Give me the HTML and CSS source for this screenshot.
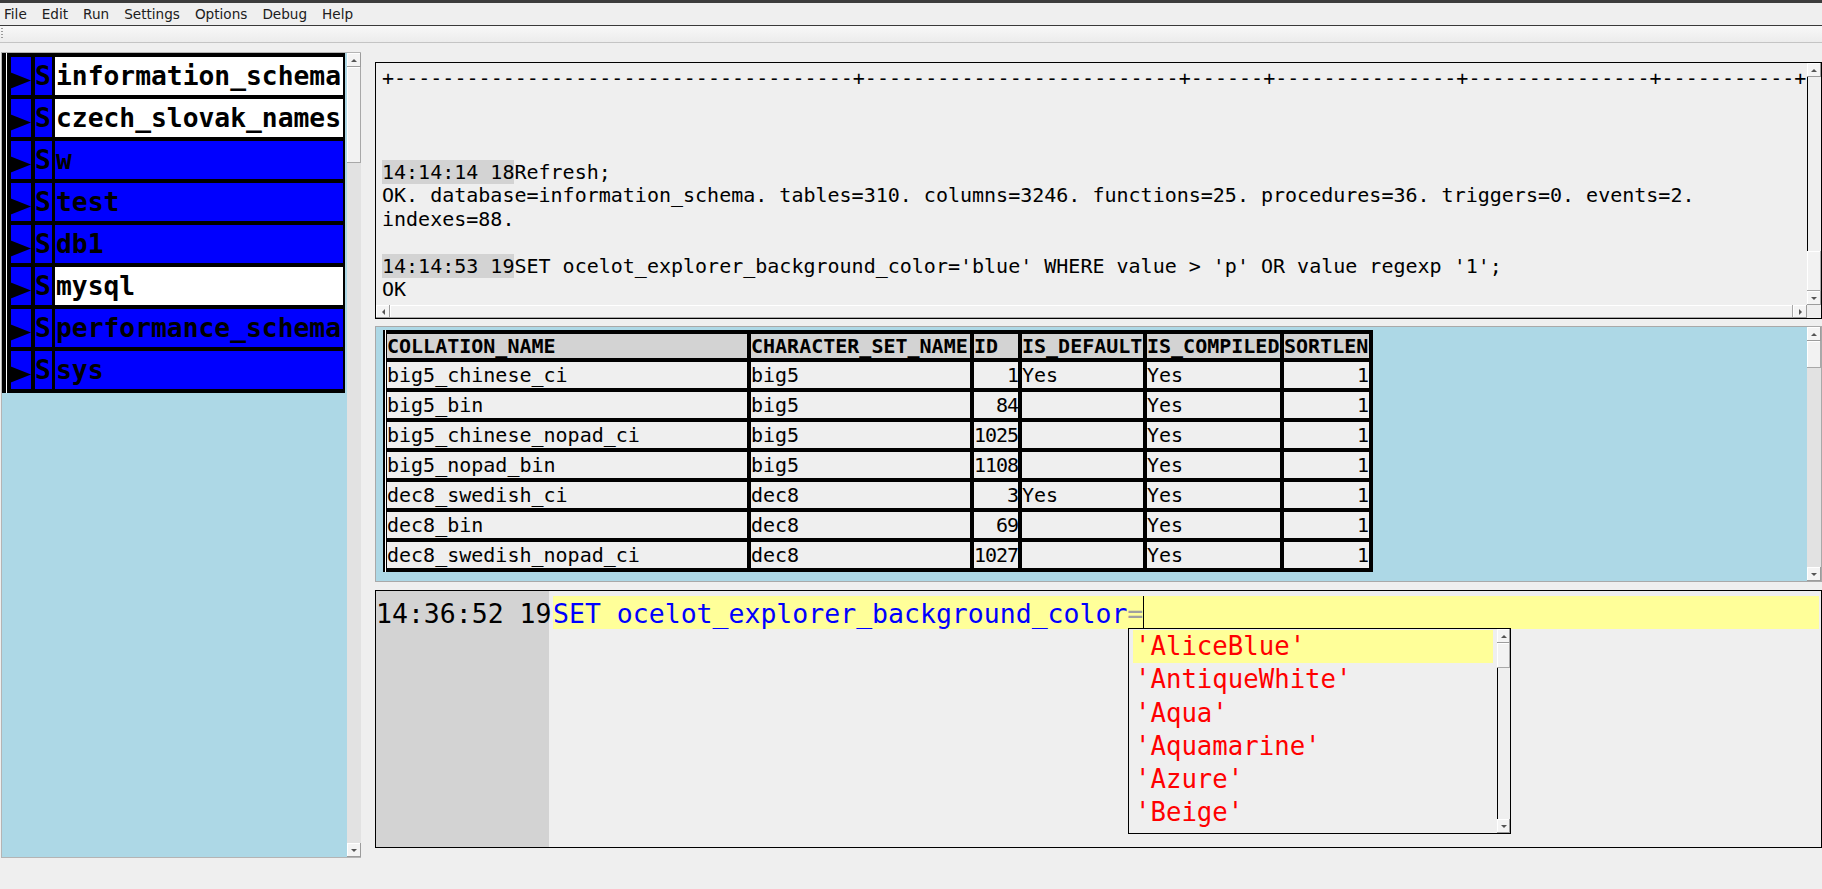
FILE: index.html
```html
<!DOCTYPE html>
<html>
<head>
<meta charset="utf-8">
<link rel="stylesheet" href="styles.css">
</head>
<body>
<div class="topstrip"></div>
<div class="menubar">
  <span>File</span><span>Edit</span><span>Run</span><span>Settings</span><span>Options</span><span>Debug</span><span>Help</span>
</div>
<div class="toolbar"><div class="grip"></div></div>
<div class="main">
  <div class="explorer">
    <div class="tree-area">
      <div class="tree">
        <div class="trow"><div class="tri"><svg class="tri-ico" width="24" height="38" viewBox="0 0 24 38"><polygon points="0,14 24,23.5 0,33"/></svg></div><div class="s">S</div><div class="name hi">information_schema</div></div>
        <div class="trow"><div class="tri"><svg class="tri-ico" width="24" height="38" viewBox="0 0 24 38"><polygon points="0,14 24,23.5 0,33"/></svg></div><div class="s">S</div><div class="name hi">czech_slovak_names</div></div>
        <div class="trow"><div class="tri"><svg class="tri-ico" width="24" height="38" viewBox="0 0 24 38"><polygon points="0,14 24,23.5 0,33"/></svg></div><div class="s">S</div><div class="name">w</div></div>
        <div class="trow"><div class="tri"><svg class="tri-ico" width="24" height="38" viewBox="0 0 24 38"><polygon points="0,14 24,23.5 0,33"/></svg></div><div class="s">S</div><div class="name">test</div></div>
        <div class="trow"><div class="tri"><svg class="tri-ico" width="24" height="38" viewBox="0 0 24 38"><polygon points="0,14 24,23.5 0,33"/></svg></div><div class="s">S</div><div class="name">db1</div></div>
        <div class="trow"><div class="tri"><svg class="tri-ico" width="24" height="38" viewBox="0 0 24 38"><polygon points="0,14 24,23.5 0,33"/></svg></div><div class="s">S</div><div class="name hi">mysql</div></div>
        <div class="trow"><div class="tri"><svg class="tri-ico" width="24" height="38" viewBox="0 0 24 38"><polygon points="0,14 24,23.5 0,33"/></svg></div><div class="s">S</div><div class="name">performance_schema</div></div>
        <div class="trow"><div class="tri"><svg class="tri-ico" width="24" height="38" viewBox="0 0 24 38"><polygon points="0,14 24,23.5 0,33"/></svg></div><div class="s">S</div><div class="name">sys</div></div>
      </div>
    </div>
    <div class="vscroll">
      <div class="arrow up"></div>
      <div class="thumb ex-thumb"></div>
      <div class="track"></div>
      <div class="arrow down"></div>
    </div>
  </div>

  <div class="work">
    <div class="output">
      <div class="out-body">
        <div class="out-text">
          <div class="ol rule">+--------------------------------------+--------------------------+------+---------------+---------------+-----------+</div>
          <div class="ol"></div>
          <div class="ol"></div>
          <div class="ol"></div>
          <div class="ol"><span class="ts">14:14:14 18</span>Refresh;</div>
          <div class="ol">OK. database=information_schema. tables=310. columns=3246. functions=25. procedures=36. triggers=0. events=2.</div>
          <div class="ol">indexes=88.</div>
          <div class="ol"></div>
          <div class="ol"><span class="ts">14:14:53 19</span>SET ocelot_explorer_background_color='blue' WHERE value &gt; 'p' OR value regexp '1';</div>
          <div class="ol">OK</div>
        </div>
        <div class="vscroll out-vs">
          <div class="arrow up"></div>
          <div class="track lined"></div>
          <div class="thumb out-thumb"></div>
          <div class="arrow down"></div>
        </div>
      </div>
      <div class="hbar">
        <div class="arrow left"></div>
        <div class="hthumb"></div>
        <div class="arrow right"></div>
        <div class="corner"></div>
      </div>
    </div>

    <div class="grid">
      <div class="grid-area">
        <table class="rs">
          <colgroup><col class="c1"><col class="c2"><col class="c3"><col class="c4"><col class="c5"><col class="c6"></colgroup>
          <tr class="hd"><th>COLLATION_NAME</th><th>CHARACTER_SET_NAME</th><th>ID</th><th>IS_DEFAULT</th><th>IS_COMPILED</th><th>SORTLEN</th></tr>
          <tr><td>big5_chinese_ci</td><td>big5</td><td class="num id">1</td><td>Yes</td><td>Yes</td><td class="num">1</td></tr>
          <tr><td>big5_bin</td><td>big5</td><td class="num id">84</td><td></td><td>Yes</td><td class="num">1</td></tr>
          <tr><td>big5_chinese_nopad_ci</td><td>big5</td><td class="num id">1025</td><td></td><td>Yes</td><td class="num">1</td></tr>
          <tr><td>big5_nopad_bin</td><td>big5</td><td class="num id">1108</td><td></td><td>Yes</td><td class="num">1</td></tr>
          <tr><td>dec8_swedish_ci</td><td>dec8</td><td class="num id">3</td><td>Yes</td><td>Yes</td><td class="num">1</td></tr>
          <tr><td>dec8_bin</td><td>dec8</td><td class="num id">69</td><td></td><td>Yes</td><td class="num">1</td></tr>
          <tr><td>dec8_swedish_nopad_ci</td><td>dec8</td><td class="num id">1027</td><td></td><td>Yes</td><td class="num">1</td></tr>
        </table>
      </div>
      <div class="vscroll grid-vs">
        <div class="arrow up"></div>
        <div class="thumb grid-thumb"></div>
        <div class="track"></div>
        <div class="arrow down"></div>
      </div>
    </div>

    <div class="editor">
      <div class="gutter">14:36:52 19</div>
      <div class="code">
        <div class="line"><span class="kw">SET ocelot_explorer_background_color</span><span class="op">=</span><span class="caret"></span></div>
        <div class="popup">
          <div class="plist">
            <div class="pitem sel">'AliceBlue'</div>
            <div class="pitem">'AntiqueWhite'</div>
            <div class="pitem">'Aqua'</div>
            <div class="pitem">'Aquamarine'</div>
            <div class="pitem">'Azure'</div>
            <div class="pitem">'Beige'</div>
            <div class="pitem">'Bisque'</div>
          </div>
          <div class="vscroll pop-vs">
            <div class="arrow up"></div>
            <div class="thumb pop-thumb"></div>
            <div class="track lined"></div>
            <div class="arrow down"></div>
          </div>
        </div>
      </div>
    </div>
  </div>
</div>
</body>
</html>
```

FILE: styles.css
```css
html, body {
  margin: 0;
  padding: 0;
}
body {
  width: 1822px;
  height: 889px;
  overflow: hidden;
  background: #efefef;
  font-family: "DejaVu Sans Mono", monospace;
  color: #000;
}
.topstrip {
  height: 3px;
  background: #3c3c3c;
}
.menubar {
  height: 23px;
  box-sizing: border-box;
  padding: 1px 0 0 4px;
  display: flex;
  gap: 15px;
  font-family: "DejaVu Sans", sans-serif;
  font-size: 13.6px;
  line-height: 21px;
  color: #202020;
  background: #efefef;
  border-bottom: 1px solid #3a3a3a;
}
.toolbar {
  height: 17px;
  box-sizing: border-box;
  background: linear-gradient(#f8f8f8, #ececec);
  border-bottom: 1px solid #c4c4c4;
  padding: 2px 0 2px 1px;
}
.grip {
  width: 2px;
  height: 12px;
  background: repeating-linear-gradient(#9a9a9a 0 1px, transparent 1px 3px);
}
.main {
  display: flex;
  align-items: flex-start;
}

/* Explorer */
.explorer {
  margin: 9px 0 0 1px;
  width: 360px;
  height: 806px;
  box-sizing: border-box;
  border: 1px solid #b4b4b4;
  border-right: none;
  display: flex;
}
.tree-area {
  width: 345px;
  background: #add8e6;
}
.tree {
  width: 343px;
  box-sizing: border-box;
  background: #000;
  padding: 4px 2px 4px 9px;
  display: flex;
  flex-direction: column;
  gap: 4px;
  box-shadow: inset 4px 0 0 #000, inset 5px 0 0 #fff;
}
.trow {
  display: flex;
  height: 38px;
}
.tri {
  width: 20px;
  margin-right: 4px;
  background: #0000ff;
  overflow: visible;
}
.tri-ico {
  display: block;
  margin-left: -4px;
  overflow: visible;
}
.tri-ico polygon {
  fill: #000;
}
.s, .name {
  font-weight: bold;
  font-size: 26.3px;
  line-height: 38px;
  white-space: nowrap;
  overflow: hidden;
  background: #0000ff;
}
.s {
  width: 17px;
  margin-right: 3px;
}
.name {
  flex: 1;
  padding-left: 1px;
}
.name.hi {
  background: #fff;
}

/* Scrollbars */
.vscroll {
  width: 14px;
  flex: none;
  display: flex;
  flex-direction: column;
  background: #e2e2e2;
}
.arrow {
  flex: none;
  width: 14px;
  height: 14px;
  box-sizing: border-box;
  background: #f4f4f4;
  box-shadow: inset -1px -1px 0 #9c9c9c, inset 1px 1px 0 #ffffff;
  display: flex;
  align-items: center;
  justify-content: center;
}
.arrow::after {
  content: "";
  width: 0;
  height: 0;
}
.arrow.up::after {
  border-left: 3px solid transparent;
  border-right: 3px solid transparent;
  border-bottom: 3px solid #555;
}
.arrow.down::after {
  border-left: 3px solid transparent;
  border-right: 3px solid transparent;
  border-top: 3px solid #555;
}
.arrow.left::after {
  border-top: 3px solid transparent;
  border-bottom: 3px solid transparent;
  border-right: 3px solid #555;
}
.arrow.right::after {
  border-top: 3px solid transparent;
  border-bottom: 3px solid transparent;
  border-left: 3px solid #555;
}
.track {
  flex: 1;
  background: #e2e2e2;
}
.track.lined {
  background: #efefef;
  box-shadow: inset 1px 0 0 #000;
}
.thumb {
  flex: none;
  background: #f2f2f2;
  box-shadow: inset -1px -1px 0 #a8a8a8, inset 1px 1px 0 #ffffff;
}
.ex-thumb { height: 96px; }

/* Work area */
.work {
  margin: 19px 0 0 14px;
  width: 1447px;
  display: flex;
  flex-direction: column;
}
.output {
  height: 257px;
  box-sizing: border-box;
  border: 1px solid #000;
  display: flex;
  flex-direction: column;
  background: #efefef;
}
.out-body {
  flex: 1;
  display: flex;
  min-height: 0;
}
.out-text {
  flex: 1;
  overflow: hidden;
  padding: 3.5px 0 0 6px;
  font-size: 20px;
  line-height: 23.5px;
}
.ol {
  height: 23.5px;
  white-space: pre;
}
.rule {
  letter-spacing: 0.03px;
}
.ts {
  background: #d3d3d3;
}
.out-vs {
  background: #efefef;
}
.out-thumb { height: 40px; }
.hbar {
  height: 13px;
  flex: none;
  display: flex;
  background: #efefef;
}
.hbar .arrow {
  height: 13px;
}
.hthumb {
  flex: 1;
  background: #f2f2f2;
  box-shadow: inset -1px -1px 0 #a8a8a8, inset 1px 1px 0 #ffffff;
}
.corner {
  width: 14px;
  background: #efefef;
}

/* Result grid */
.grid {
  margin-top: 7px;
  height: 256px;
  box-sizing: border-box;
  border: 1px solid #a9a9a9;
  display: flex;
}
.grid-area {
  flex: 1;
  background: #add8e6;
  padding: 3px 0 0 7px;
  overflow: hidden;
}
.rs {
  border-collapse: separate;
  border-spacing: 4px;
  background: #000;
  table-layout: fixed;
  width: 990px;
  box-shadow: inset 2px 0 0 #000, inset 3px 0 0 #fff;
  font-size: 20px;
}
.c1 { width: 360px; }
.c2 { width: 219px; }
.c3 { width: 44px; }
.c4 { width: 121px; }
.c5 { width: 133px; }
.c6 { width: 85px; }
.rs th, .rs td {
  padding: 0;
  white-space: nowrap;
  overflow: hidden;
  text-align: left;
  background: #efefef;
  height: 26px;
  line-height: 26px;
}
.rs th {
  background: #d3d3d3;
  font-weight: bold;
  height: 24px;
  line-height: 24px;
}
.rs td.num {
  text-align: right;
}
.rs td.id {
  letter-spacing: -1px;
}
.grid-vs {
  background: #e8e8e8;
}
.grid-thumb { height: 27px; }

/* Editor */
.editor {
  margin-top: 8px;
  height: 258px;
  box-sizing: border-box;
  border: 1px solid #000;
  display: flex;
  background: #efefef;
}
.gutter {
  width: 173px;
  flex: none;
  background: #d3d3d3;
  font-size: 26.5px;
  padding-top: 8px;
  line-height: 30px;
  white-space: pre;
}
.code {
  flex: 1;
  position: relative;
  padding: 5px 2px 0 4px;
}
.line {
  height: 33px;
  box-sizing: border-box;
  padding-top: 3px;
  line-height: 30px;
  background: #ffff99;
  font-size: 26.5px;
  white-space: pre;
}
.kw { color: #0000ff; }
.op { color: #a0a0a0; }
.caret {
  display: inline-block;
  width: 1px;
  height: 33px;
  margin-top: -3px;
  vertical-align: top;
  background: #000;
}
.popup {
  position: absolute;
  left: 579px;
  top: 37px;
  width: 383px;
  height: 206px;
  box-sizing: border-box;
  border: 1px solid #000;
  background: #efefef;
  display: flex;
  overflow: hidden;
}
.plist {
  flex: 1;
  padding: 1px 4px 0 4px;
  overflow: hidden;
}
.pitem {
  height: 33.3px;
  line-height: 33px;
  padding-left: 2px;
  color: #ff0000;
  font-size: 25.7px;
  white-space: pre;
}
.pitem.sel {
  background: #ffff99;
}
.pop-vs {
  width: 13px;
  background: #efefef;
}
.pop-vs .arrow {
  width: 13px;
}
.pop-thumb { height: 25px; }
```
